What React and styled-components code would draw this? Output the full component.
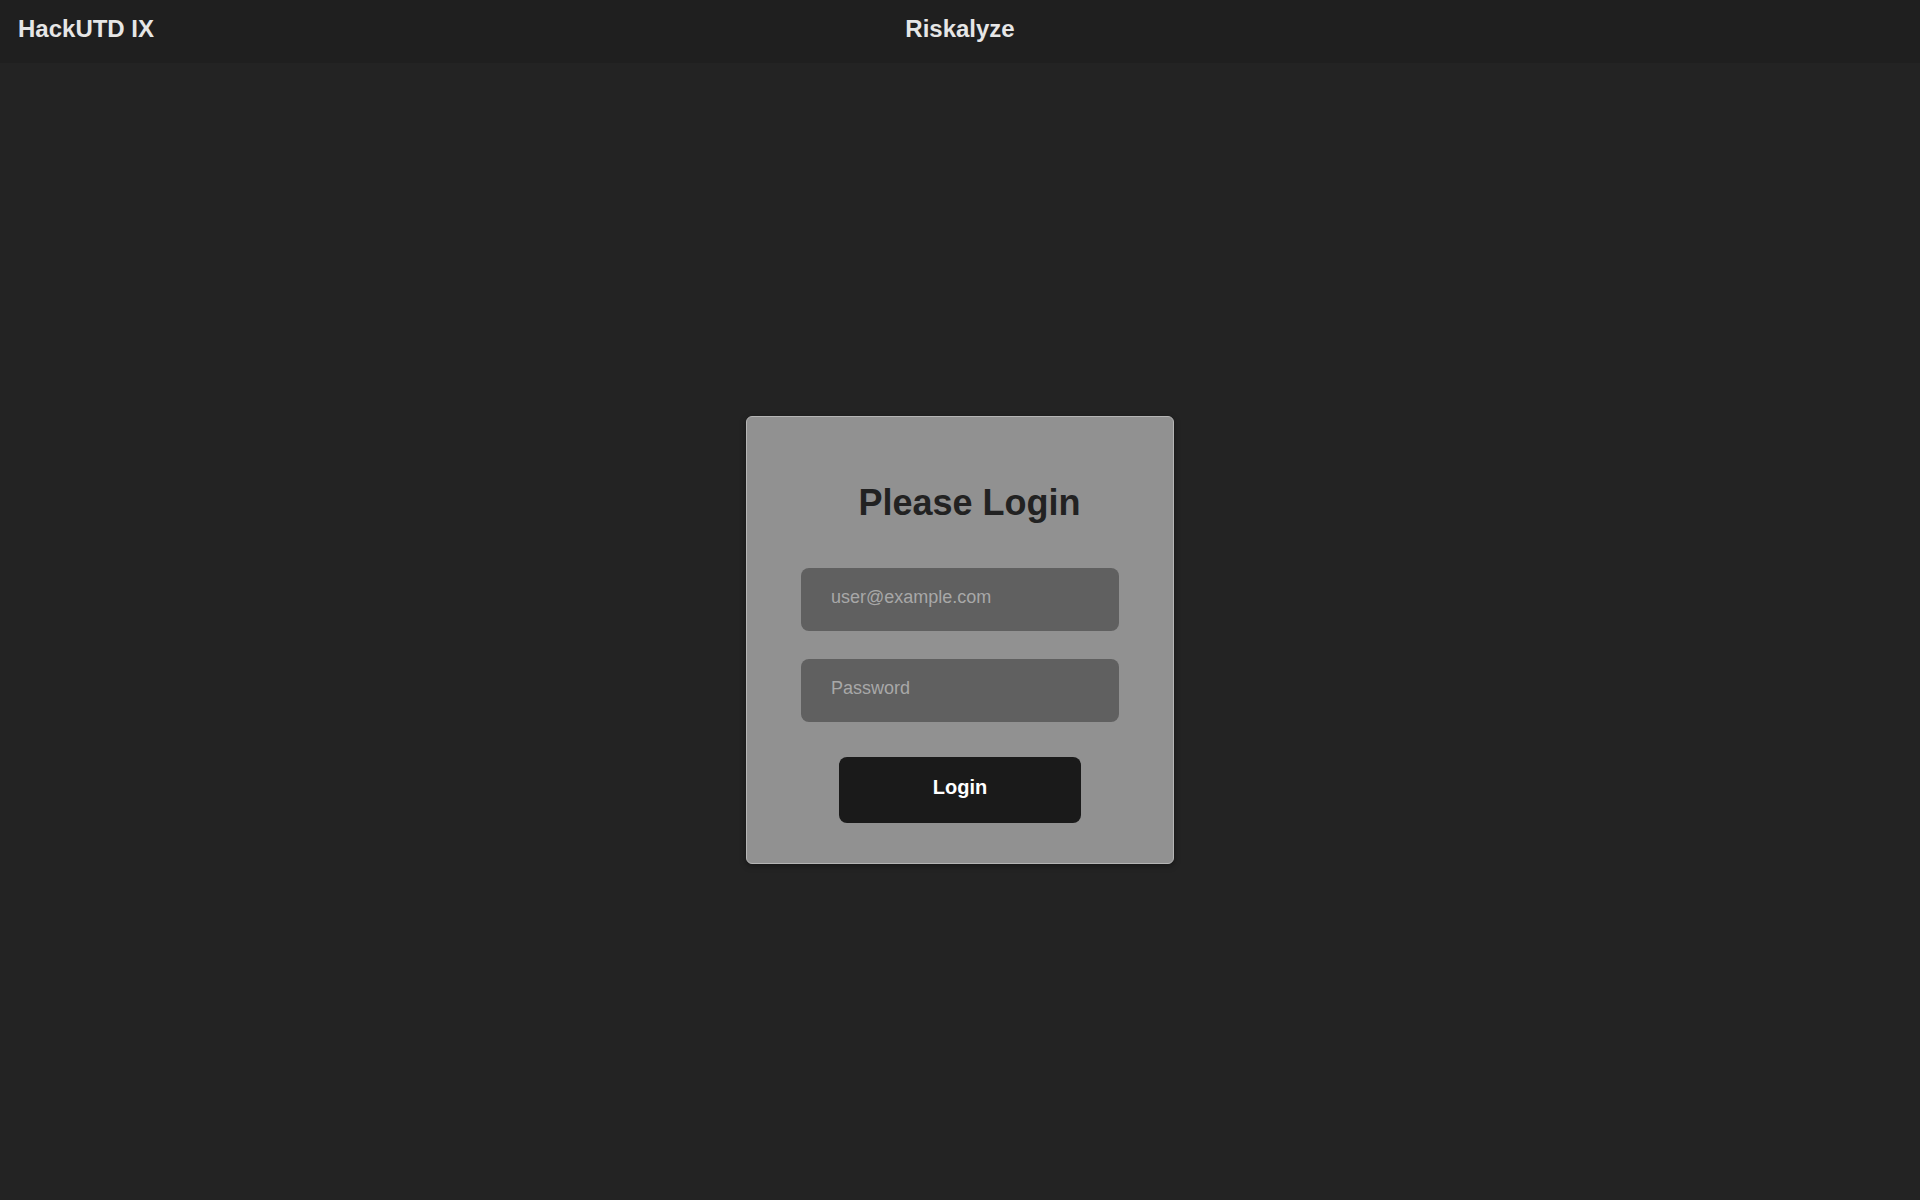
import React from 'react'
import styled, { createGlobalStyle } from 'styled-components'

const GlobalStyle = createGlobalStyle`
  html, body {
    margin: 0;
    padding: 0;
    background: #232323;
    font-family: "Liberation Sans", Arial, Helvetica, sans-serif;
  }
  * { box-sizing: border-box; }
`;

const Page = styled.div`
  min-height: 1200px;
  display: flex;
  flex-direction: column;
  background: #232323;
`;

const Header = styled.header`
  height: 63px;
  background: #1f1f1f;
  display: grid;
  grid-template-columns: 1fr auto 1fr;
  align-items: center;
  padding: 0 18px;
`;

const Brand = styled.div`
  color: #e6e6e6;
  font-size: 24px;
  font-weight: 700;
  justify-self: ${p => (p.center ? 'center' : 'start')};
  margin-top: -6px;
`;

const Main = styled.main`
  flex: 1;
  display: flex;
  justify-content: center;
  align-items: center;
  padding-top: 17px;
`;

const Card = styled.form`
  width: 428px;
  height: 448px;
  background: #919191;
  border: 1px solid #b5b5b5;
  border-radius: 6px;
  box-shadow: 0 2px 6px rgba(0, 0, 0, 0.35);
  display: flex;
  flex-direction: column;
  align-items: center;
  padding-top: 65px;
`;

const Title = styled.h1`
  margin: 0 0 44px 19px;
  font-size: 36px;
  font-weight: 700;
  color: #222222;
`;

const Input = styled.input`
  width: 318px;
  height: 63px;
  border: none;
  outline: none;
  border-radius: 8px;
  background: #606060;
  padding: 0 30px 4px;
  margin-bottom: ${p => p.gap || 0}px;
  font-family: inherit;
  font-size: 18px;
  color: #eeeeee;

  &::placeholder {
    color: #a8a8a8;
  }
`;

const Button = styled.button`
  width: 242px;
  height: 66px;
  border: none;
  border-radius: 8px;
  background: #1a1a1a;
  color: #ffffff;
  font-family: inherit;
  font-size: 20px;
  font-weight: 700;
  padding: 0 0 6px;
  cursor: pointer;
`;

export default function App() {
  return (
    <Page>
      <GlobalStyle />
      <Header>
        <Brand>HackUTD IX</Brand>
        <Brand center>Riskalyze</Brand>
        <div />
      </Header>
      <Main>
        <Card onSubmit={e => e.preventDefault()}>
          <Title>Please Login</Title>
          <Input type="email" placeholder="user@example.com" gap={28} />
          <Input type="password" placeholder="Password" gap={35} />
          <Button type="submit">Login</Button>
        </Card>
      </Main>
    </Page>
  )
}
